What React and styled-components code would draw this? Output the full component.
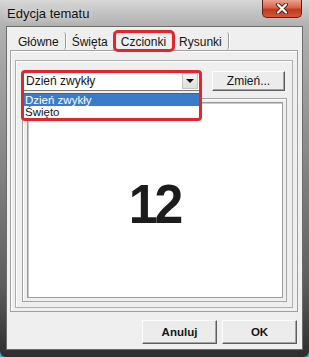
import React from 'react';
import styled, { createGlobalStyle } from 'styled-components';

const GlobalStyle = createGlobalStyle`
  html, body {
    margin: 0;
    padding: 0;
    background: #3aa6c2;
  }
  body {
    font-family: "Liberation Sans", Arial, sans-serif;
    font-size: 12px;
    color: #141414;
  }
`

const Window = styled.div`
  width: 309px;
  height: 357px;
  box-sizing: border-box;
  display: flex;
  flex-direction: column;
  padding: 0 6px 7px 6px;
  border-radius: 0 0 6px 6px;
  background: linear-gradient(to bottom, #cfcfcf 0, #b2b2b2 26px, #8c8c8c 40%, #5c5c5c 80%, #2e2e2e 100%);
`

const TitleBar = styled.div`
  height: 26px;
  display: flex;
  justify-content: space-between;
  align-items: flex-start;
  margin: 0 -6px;
  padding: 0 7px 0 7px;
  background: linear-gradient(to bottom, #d8d8d8 0%, #c4c4c4 45%, #b1b1b1 100%);
`

const Title = styled.span`
  padding-top: 6px;
  font-size: 13px;
  color: #111;
  text-shadow: 0 0 6px #eee;
`

const CloseButton = styled.div`
  width: 40px;
  height: 18px;
  box-sizing: border-box;
  display: flex;
  align-items: center;
  justify-content: center;
  border: 1px solid #5b2418;
  border-top: none;
  border-radius: 0 0 5px 5px;
  background: linear-gradient(to bottom, #e9a28f 0%, #d8644a 45%, #c23a1f 55%, #d4553a 100%);
`

const Client = styled.div`
  flex: 1;
  display: flex;
  flex-direction: column;
  background: #efefef;
  border: 1px solid #6c6c6c;
  padding: 3px 4px 5px 3px;
`

const TabStrip = styled.div`
  position: relative;
  z-index: 1;
  display: flex;
  height: 20px;
  padding-left: 2px;
`

const Tab = styled.div`
  display: flex;
  align-items: center;
  padding: 2px 6px 0 6px;
  border-right: 1px solid #9c9c9c;
  box-shadow: 1px 0 0 #fff;
  margin-top: 2px;
  outline: ${p => (p.$active ? '3px solid #e3262b' : 'none')};
  outline-offset: -1px;
  border-radius: 3px;
`

const TabPanel = styled.div`
  flex: 1;
  display: flex;
  flex-direction: column;
  border: 1px solid #a0a0a0;
  box-shadow: inset 1px 1px 0 #fff;
  padding: 9px 4px 3px 4px;
`

const Group = styled.div`
  flex: 1;
  display: flex;
  flex-direction: column;
  gap: 7px;
  border: 1px solid #adadad;
  box-shadow: inset 1px 1px 0 #fff;
  padding: 10px 5px 5px 6px;
`

const ControlRow = styled.div`
  display: flex;
  align-items: center;
  gap: 12px;
  padding-left: 1px;
`

const ComboArea = styled.div`
  position: relative;
  width: 177px;
`

const Combo = styled.div`
  height: 20px;
  box-sizing: border-box;
  display: flex;
  align-items: center;
  background: #fff;
  border: 1px solid #7a7a7a;
  padding-left: 2px;
`

const ComboText = styled.span`
  flex: 1;
`

const ArrowButton = styled.div`
  width: 16px;
  height: 16px;
  margin-right: 1px;
  display: flex;
  align-items: center;
  justify-content: center;
  background: linear-gradient(to bottom, #f4f4f4, #dedede);
  border: 1px solid #c4c4c4;
  box-sizing: border-box;

  &::after {
    content: '';
    border-left: 4px solid transparent;
    border-right: 4px solid transparent;
    border-top: 4px solid #111;
  }
`

const Popup = styled.div`
  position: absolute;
  top: 22px;
  left: 0;
  width: 177px;
  box-sizing: border-box;
  background: #fff;
  border: 1px solid #5f5f5f;
  z-index: 2;
`

const Option = styled.div`
  height: 12px;
  line-height: 12px;
  font-size: 11.5px;
  padding-left: 1px;
  overflow: hidden;
  background: ${p => (p.$active ? '#3b7bcc' : 'transparent')};
  color: ${p => (p.$active ? '#fff' : '#141414')};
`

const Annotation = styled.div`
  position: absolute;
  top: -1px;
  left: -2px;
  width: 181px;
  height: 51px;
  box-sizing: border-box;
  border: 3px solid #e3262b;
  border-radius: 4px;
  z-index: 3;
  pointer-events: none;
`

const PushButton = styled.div`
  width: ${p => p.$w}px;
  height: ${p => p.$h}px;
  box-sizing: border-box;
  display: flex;
  align-items: center;
  justify-content: center;
  background: #ececec;
  border: 1px solid;
  border-color: #fdfdfd #5e5e5e #5e5e5e #fdfdfd;
  box-shadow: inset -1px -1px 0 #a4a4a4;
  font-weight: ${p => (p.$bold ? 'bold' : 'normal')};
  font-size: ${p => (p.$bold ? '11.5px' : '12px')};
`

const Preview = styled.div`
  flex: 1;
  display: flex;
  border: 1px solid #a4a4a4;
  box-shadow: inset 1px 1px 0 #fff;
  padding: 3px 3px 3px 4px;
`

const PreviewCanvas = styled.div`
  flex: 1;
  display: flex;
  align-items: center;
  justify-content: center;
  padding-top: 8px;
  background: #fff;
  border: 1px solid #9c9c9c;
  box-shadow: inset 1px 1px 0 #c8c8c8;
`

const BigNumber = styled.span`
  font-family: "Liberation Sans", Arial, sans-serif;
  font-weight: bold;
  font-size: 55px;
  line-height: 1;
  letter-spacing: -3px;
  color: #1c1c1c;
  transform: scaleX(0.94);
`

const ButtonRow = styled.div`
  display: flex;
  justify-content: flex-end;
  gap: 5px;
  margin-top: 8px;
  padding-right: 1px;
`

function CloseIcon() {
  return (
    <svg width="14" height="11" viewBox="0 0 14 11">
      <path d="M3 1.5 L11 9.5 M11 1.5 L3 9.5" stroke="#5a1f12" strokeWidth="4" strokeLinecap="round" />
      <path d="M3 1.5 L11 9.5 M11 1.5 L3 9.5" stroke="#ffffff" strokeWidth="2.2" strokeLinecap="round" />
    </svg>
  )
}

export default function App() {
  const tabs = ['Główne', 'Święta', 'Czcionki', 'Rysunki']

  return (
    <>
      <GlobalStyle />
      <Window>
        <TitleBar>
          <Title>Edycja tematu</Title>
          <CloseButton><CloseIcon /></CloseButton>
        </TitleBar>
        <Client>
          <TabStrip>
            {tabs.map(t => (
              <Tab key={t} $active={t === 'Czcionki'}>{t}</Tab>
            ))}
          </TabStrip>
          <TabPanel>
            <Group>
              <ControlRow>
                <ComboArea>
                  <Combo>
                    <ComboText>Dzień zwykły</ComboText>
                    <ArrowButton />
                  </Combo>
                  <Popup>
                    <Option $active>Dzień zwykły</Option>
                    <Option>Święto</Option>
                  </Popup>
                  <Annotation />
                </ComboArea>
                <PushButton $w={73} $h={20}>Zmień...</PushButton>
              </ControlRow>
              <Preview>
                <PreviewCanvas>
                  <BigNumber>12</BigNumber>
                </PreviewCanvas>
              </Preview>
            </Group>
          </TabPanel>
          <ButtonRow>
            <PushButton $w={75} $h={24} $bold>Anuluj</PushButton>
            <PushButton $w={75} $h={24} $bold>OK</PushButton>
          </ButtonRow>
        </Client>
      </Window>
    </>
  )
}
